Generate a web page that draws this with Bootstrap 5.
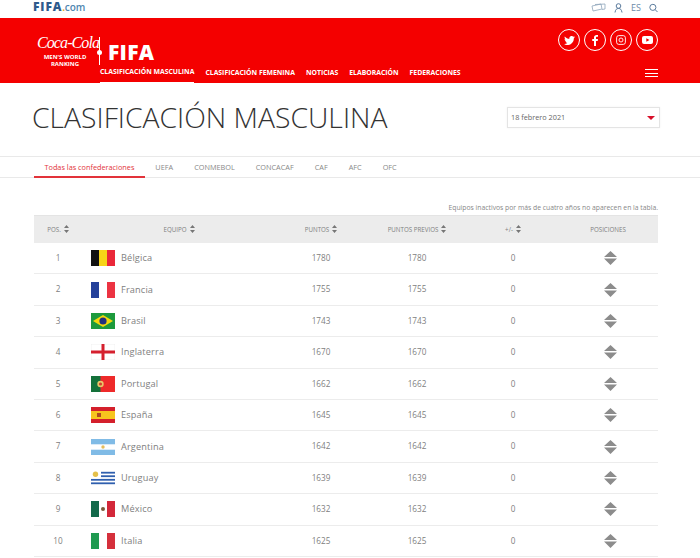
<!DOCTYPE html>
<html lang="es">
<head>
    <meta charset="UTF-8">
    <meta name="viewport" content="width=device-width, initial-scale=1">
    <title>Clasificación masculina</title>
    <link href="https://cdn.jsdelivr.net/npm/bootstrap@5.3.0/dist/css/bootstrap.min.css" rel="stylesheet">
    <style>
        body { font-family: "Open Sans", "Liberation Sans", sans-serif; background: #fff; color: #777; overflow: hidden; }
        .topbar { height: 18px; padding: 0 42px 3px 33px; }
        .fifa-com { font-size: 12px; font-weight: 800; color: #2f5a8c; letter-spacing: .9px; line-height: 14px; }
        .fifa-com span { font-weight: 600; font-size: 10px; color: #4f86b0; letter-spacing: 0; }
        .fifa-com i { font-style: normal; color: #e8b020; font-size: 8px; letter-spacing: 0; }
        .lang { font-size: 9px; color: #6d8aa8; margin: 0 8px; }
        .redband { height: 65px; background: #f40000; padding: 0 42px 0 37px; color: #fff; }
        .brand-box { width: 62px; margin-top: 15px; text-align: center; }
        .coke { font-family: "Liberation Serif", serif; font-style: italic; font-size: 16px; line-height: 20px; white-space: nowrap; letter-spacing: -.9px; text-align: left; }
        .coke-sub { font-size: 6px; font-weight: 700; line-height: 7px; margin-top: 1px; padding-right: 6px; white-space: nowrap; }
        .brand-rule { width: 1px; height: 28px; background: #fff; margin-top: 19px; position: relative; }
        .brand-rule::after { content: ""; position: absolute; left: -2px; top: 13px; width: 5px; height: 5px; border-radius: 50%; background: #fff; }
        .fifa-word { font-size: 21px; font-weight: 800; line-height: 22px; margin: 23px 0 0 8px; letter-spacing: .3px; }
        .main-nav { gap: 11px; position: absolute; left: 100px; top: 64px; height: 19px; }
        .main-nav .nav-link { color: #fff; font-size: 6.85px; font-weight: 700; padding: 4px 0 0; height: 19px; white-space: nowrap; }
        .main-nav .nav-link.active { border-bottom: 1px solid #fff; padding-top: 2.500px; }
        .social-round { width: 22px; height: 22px; border: 1px solid #fff; border-radius: 50%; }
        .socials { gap: 4px; margin-top: 11px; }
        .burger { width: 13px; height: 8px; border-top: 1px solid #fff; border-bottom: 1px solid #fff; position: absolute; left: 645px; top: 69px; }
        .burger::after { content: ""; display: block; height: 1px; background: #fff; margin-top: 2.500px; }
        .title-row { height: 73px; padding: 0 40px 4px 32px; }
        .title-text { font-size: 28.300px; font-weight: 300; color: #333; margin: 0; line-height: 1; }
        .date-select { width: 153px; height: 21px; border: 1px solid #e4e4e4; font-size: 7.300px; color: #666; padding: 0 4px 0 3px; box-shadow: 0 0 2px rgba(0,0,0,.06); }
        .date-caret { width: 0; height: 0; border: 4px solid transparent; border-top: 4px solid #d8102a; border-bottom: 0; }
        .conf-band { height: 22px; border-top: 1px solid #e9e9e9; border-bottom: 1px solid #e9e9e9; padding-left: 34px; }
        .conf-band .nav-link { color: #888; font-size: 7.300px; padding: 0 10.500px; line-height: 20px; height: 21px; }
        .conf-band .nav-link.active { color: #e2333a; border-bottom: 2px solid #e2333a; }
        .inactive-note { font-size: 6.800px; color: #888; text-align: right; padding-right: 42px; margin-top: 25px; line-height: 10px; height: 12px; }
        .rank-wrap { padding: 0 42px 0 34px; }
        .rank-table { table-layout: fixed; width: 624px; margin: 0; border-collapse: collapse; }
        .rank-table th { background: #ececec; font-size: 6.200px; font-weight: 400; color: #808080; text-align: center; height: 27px; padding: 0; vertical-align: middle; border-top: 1px solid #e4e4e4; border-bottom: 0; }
        .rank-table td { font-size: 8.200px; color: #808080; text-align: center; height: 31.400px; padding: 0; vertical-align: middle; border-bottom: 1px solid #ececec; }
        .rank-table td.team-cell { text-align: left; padding-left: 9px; font-size: 9.200px; letter-spacing: .15px; }
        .team-flag { width: 24px; height: 16px; display: block; margin-right: 6px; flex: none; }
        .sort-mark { display: inline-block; width: 5px; margin-left: 3px; vertical-align: -1px; }
        .move-mark { display: block; margin: 0 auto; position: relative; left: 2px; }
    </style>
</head>
<body>
    <div class="topbar d-flex justify-content-between align-items-center">
        <div class="fifa-com">FIFA<i>.</i><span>com</span></div>
        <div class="d-flex align-items-center">
            <svg class="me-2" width="15" height="10" viewBox="0 0 15 10" fill="none" stroke="#8ea4ba" stroke-width=".8"><path d="M1 3l9-2 1 5-9 2z"/><path d="M4 1.500l10-.5v5l-3 .5"/></svg>
            <svg width="9" height="10" viewBox="0 0 9 10" fill="none" stroke="#5a7a9c" stroke-width="1"><circle cx="4.500" cy="3" r="2.300"/><path d="M1 9.500c.5-3 1.500-4 3.500-4s3 1 3.500 4"/></svg>
            <span class="lang">ES</span>
            <svg width="9" height="10" viewBox="0 0 10 10" fill="none" stroke="#5a7a9c" stroke-width="1.100"><circle cx="4.300" cy="4.300" r="3.400"/><path d="M6.800 6.800l2.700 2.700"/></svg>
        </div>
    </div>
    <div class="redband d-flex">
        <div class="brand-box">
            <div class="coke">Coca-Cola</div>
            <div class="coke-sub">MEN'S WORLD<br>RANKING</div>
        </div>
        <div class="brand-rule"></div>
        <div class="fifa-word">FIFA</div>
        <div class="socials d-flex ms-auto align-items-start">
            <div class="social-round d-flex align-items-center justify-content-center">
                <svg width="11" height="9" viewBox="0 0 24 20" fill="#fff"><path d="M24 2.400c-.9.400-1.800.7-2.800.8 1-.6 1.800-1.500 2.200-2.700-1 .6-2 1-3.100 1.200A4.900 4.900 0 0 0 11.900 6.200C7.800 6 4.200 4 1.700.9.400 3.100 1 6 3.200 7.500c-.8 0-1.600-.2-2.200-.6 0 2.400 1.700 4.400 3.900 4.900-.7.200-1.500.2-2.200.1.600 2 2.400 3.400 4.600 3.400A9.900 9.900 0 0 1 0 17.800 14 14 0 0 0 21.500 5.400c1-.7 1.800-1.600 2.500-3z"/></svg>
            </div>
            <div class="social-round d-flex align-items-center justify-content-center">
                <svg width="6" height="11" viewBox="0 0 12 22" fill="#fff"><path d="M8 22V12h3.400l.6-4H8V5.500C8 4.300 8.400 3.500 10 3.500h2V.2C11.600.1 10.500 0 9.200 0 6.300 0 4 1.800 4 5.100V8H.5v4H4v10z"/></svg>
            </div>
            <div class="social-round d-flex align-items-center justify-content-center">
                <svg width="10" height="10" viewBox="0 0 10 10" fill="none" stroke="#fff" stroke-width=".9"><rect x=".6" y=".6" width="8.800" height="8.800" rx="2.200"/><circle cx="5" cy="5" r="2"/></svg>
            </div>
            <div class="social-round d-flex align-items-center justify-content-center">
                <svg width="11" height="8" viewBox="0 0 11 8"><rect width="11" height="8" rx="2" fill="#fff"/><path d="M4.300 2.200v3.600L7.500 4z" fill="#f40000"/></svg>
            </div>
        </div>
    </div>
    <ul class="nav main-nav">
        <li class="nav-item"><a class="nav-link active" href="#">CLASIFICACIÓN MASCULINA</a></li>
        <li class="nav-item"><a class="nav-link" href="#">CLASIFICACIÓN FEMENINA</a></li>
        <li class="nav-item"><a class="nav-link" href="#">NOTICIAS</a></li>
        <li class="nav-item"><a class="nav-link" href="#">ELABORACIÓN</a></li>
        <li class="nav-item"><a class="nav-link" href="#">FEDERACIONES</a></li>
    </ul>
    <div class="burger"></div>

    <div class="title-row d-flex justify-content-between align-items-center">
        <h1 class="title-text">CLASIFICACIÓN MASCULINA</h1>
        <div class="date-select d-flex justify-content-between align-items-center">
            <span>18 febrero 2021</span>
            <span class="date-caret"></span>
        </div>
    </div>

    <ul class="nav conf-band">
        <li class="nav-item"><a class="nav-link active" href="#">Todas las confederaciones</a></li>
        <li class="nav-item"><a class="nav-link" href="#">UEFA</a></li>
        <li class="nav-item"><a class="nav-link" href="#">CONMEBOL</a></li>
        <li class="nav-item"><a class="nav-link" href="#">CONCACAF</a></li>
        <li class="nav-item"><a class="nav-link" href="#">CAF</a></li>
        <li class="nav-item"><a class="nav-link" href="#">AFC</a></li>
        <li class="nav-item"><a class="nav-link" href="#">OFC</a></li>
    </ul>

    <div class="inactive-note">Equipos inactivos por más de cuatro años no aparecen en la tabla.</div>

    <div class="rank-wrap">
        <table class="table rank-table">
            <colgroup>
                <col style="width:48px"><col style="width:194px"><col style="width:90px"><col style="width:102px"><col style="width:90px"><col style="width:100px">
            </colgroup>
            <thead>
                <tr id="headRow"></tr>
            </thead>
            <tbody id="rankBody"></tbody>
        </table>
    </div>

    <script src="https://cdn.jsdelivr.net/npm/bootstrap@5.3.0/dist/js/bootstrap.bundle.min.js"></script>
    <script>
        const sortMark = '<svg class="sort-mark" width="5" height="8" viewBox="0 0 5 8" fill="#777"><path d="M2.500 0L5 3H0zM2.500 8L0 5h5z"/></svg>';
        const moveMark = '<svg class="move-mark" width="13" height="14" viewBox="0 0 13 14" fill="#8c8c8c"><path d="M6.500 0l6.500 6H0zM0 7.500h13L6.500 14z"/></svg>';

        const vbars = (a, b, c) => `<rect width="8" height="16" fill="${a}"/><rect x="8" width="8" height="16" fill="${b}"/><rect x="16" width="8" height="16" fill="${c}"/>`;

        const flags = {
            be: vbars('#111', '#f7d417', '#ea2839'),
            fr: vbars('#24409a', '#fff', '#ec3342'),
            br: '<rect width="24" height="16" fill="#1d9a3c"/><path d="M12 2l10 6-10 6L2 8z" fill="#f4d80c"/><circle cx="12" cy="8" r="3.600" fill="#23307f"/>',
            en: '<rect width="24" height="16" fill="#fff" stroke="#e4e4e4" stroke-width=".5"/><rect x="10.500" width="3" height="16" fill="#d5202e"/><rect y="6.500" width="24" height="3" fill="#d5202e"/>',
            pt: '<rect width="24" height="16" fill="#ee2a2a"/><rect width="9.500" height="16" fill="#14713a"/><circle cx="9.500" cy="8" r="3.200" fill="#e8c86a"/><circle cx="9.500" cy="8" r="1.600" fill="#d04030"/>',
            es: '<rect width="24" height="16" fill="#d4202c"/><rect y="4" width="24" height="8" fill="#f7c51e"/><rect x="6" y="6" width="4" height="4" fill="#b04a20"/>',
            ar: '<rect width="24" height="16" fill="#fff"/><rect width="24" height="5.300" fill="#80bbe6"/><rect y="10.700" width="24" height="5.300" fill="#80bbe6"/><circle cx="12" cy="8" r="1.700" fill="#e6bd5c"/>',
            uy: '<rect width="24" height="16" fill="#fff"/><rect y="1.800" width="24" height="1.800" fill="#2f5fae"/><rect y="5.300" width="24" height="1.800" fill="#2f5fae"/><rect y="8.900" width="24" height="1.800" fill="#2f5fae"/><rect y="12.400" width="24" height="1.800" fill="#2f5fae"/><rect width="10" height="8.500" fill="#fff"/><circle cx="4.500" cy="4.200" r="2.700" fill="#e4c04a"/>',
            mx: vbars('#12694a', '#fff', '#d3283a') + '<circle cx="12" cy="8" r="2" fill="#7a5a3a"/>',
            it: vbars('#1f9a50', '#fff', '#d5303c')
        };

        const teams = [
            [1, 'be', 'Bélgica', 1780, 1780],
            [2, 'fr', 'Francia', 1755, 1755],
            [3, 'br', 'Brasil', 1743, 1743],
            [4, 'en', 'Inglaterra', 1670, 1670],
            [5, 'pt', 'Portugal', 1662, 1662],
            [6, 'es', 'España', 1645, 1645],
            [7, 'ar', 'Argentina', 1642, 1642],
            [8, 'uy', 'Uruguay', 1639, 1639],
            [9, 'mx', 'México', 1632, 1632],
            [10, 'it', 'Italia', 1625, 1625]
        ];

        document.getElementById('headRow').innerHTML =
            ['POS.', 'EQUIPO', 'PUNTOS', 'PUNTOS PREVIOS', '+/-'].map(h => `<th>${h}${sortMark}</th>`).join('') + '<th>POSICIONES</th>';

        document.getElementById('rankBody').innerHTML = teams.map(t => `
            <tr>
                <td>${t[0]}</td>
                <td class="team-cell"><div class="d-flex align-items-center"><svg class="team-flag" viewBox="0 0 24 16">${flags[t[1]]}</svg>${t[2]}</div></td>
                <td>${t[3]}</td>
                <td>${t[4]}</td>
                <td>0</td>
                <td>${moveMark}</td>
            </tr>`).join('');
    </script>
</body>
</html>
